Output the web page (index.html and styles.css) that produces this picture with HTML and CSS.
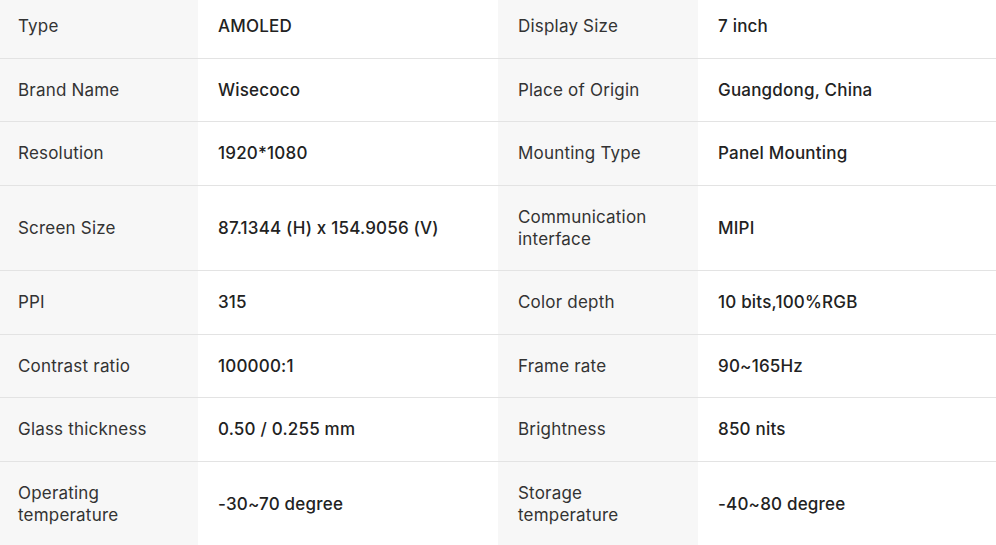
FILE: index.html
```html
<!DOCTYPE html>
<html lang="en">
<head>
<meta charset="utf-8">
<link rel="stylesheet" href="styles.css">
</head>
<body>
<table class="spec">
  <colgroup>
    <col class="c1"><col class="c2"><col class="c3"><col class="c4">
  </colgroup>
  <tbody>
    <tr><th>Type</th><td>AMOLED</td><th>Display Size</th><td>7 inch</td></tr>
    <tr><th>Brand Name</th><td>Wisecoco</td><th>Place of Origin</th><td>Guangdong, China</td></tr>
    <tr><th>Resolution</th><td>1920*1080</td><th>Mounting Type</th><td>Panel Mounting</td></tr>
    <tr><th>Screen Size</th><td>87.1344 (H) x 154.9056 (V)</td><th>Communication<br>interface</th><td>MIPI</td></tr>
    <tr><th>PPI</th><td>315</td><th>Color depth</th><td>10 bits,100%RGB</td></tr>
    <tr><th>Contrast ratio</th><td>100000:1</td><th>Frame rate</th><td>90~165Hz</td></tr>
    <tr><th>Glass thickness</th><td>0.50 / 0.255 mm</td><th>Brightness</th><td>850 nits</td></tr>
    <tr><th>Operating<br>temperature</th><td>-30~70 degree</td><th>Storage<br>temperature</th><td>-40~80 degree</td></tr>
  </tbody>
</table>
</body>
</html>
```
FILE: styles.css
```css
html, body {
  margin: 0;
  padding: 0;
  background: #ffffff;
  overflow: hidden;
}
.spec {
  width: 996px;
  border-collapse: collapse;
  table-layout: fixed;
  margin-top: -4.8px;
  font-family: Inter, "Noto Sans", sans-serif;
  font-size: 17px;
  line-height: 22px;
  letter-spacing: 0.2px;
}
.c1 { width: 198px; }
.c2 { width: 300px; }
.c3 { width: 200px; }
.c4 { width: 298px; }
.spec tr {
  border-bottom: 1px solid #e3e3e3;
}
.spec th,
.spec td {
  padding: 20.25px 16px 20.25px 20px;
  text-align: left;
  vertical-align: middle;
}
.spec th {
  background: #f7f7f7;
  font-weight: 400;
  color: #333333;
}
.spec tr > th:first-child {
  padding-left: 18px;
}
.spec td {
  background: #ffffff;
  font-weight: 500;
  color: #222222;
}
```
